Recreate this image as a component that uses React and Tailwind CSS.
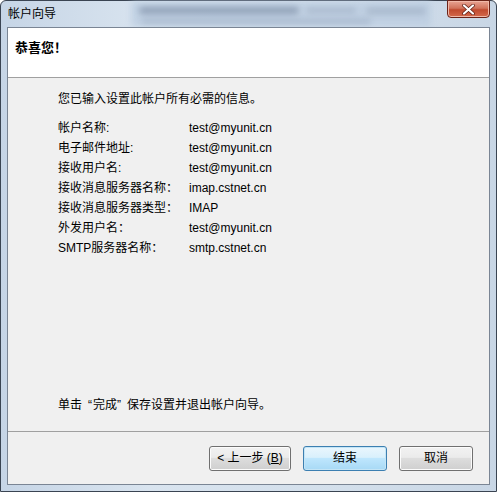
import React from "react";

const rows = [
  ["帐户名称:", "test@myunit.cn"],
  ["电子邮件地址:", "test@myunit.cn"],
  ["接收用户名:", "test@myunit.cn"],
  ["接收消息服务器名称：", "imap.cstnet.cn"],
  ["接收消息服务器类型：", "IMAP"],
  ["外发用户名：", "test@myunit.cn"],
  ["SMTP服务器名称：", "smtp.cstnet.cn"],
];

const font = "font-['Liberation_Sans','Noto_Sans_CJK_SC',sans-serif]";

function VistaButton({ children, primary, className = "" }) {
  return (
    <div
      className={`flex h-[25px] items-center justify-center rounded-[3px] border text-[12px] text-black ${
        primary
          ? "border-[#3c7fb1] bg-[linear-gradient(#eaf6fd_0%,#d9f0fc_45%,#bee6fd_50%,#a7d9f5_100%)] shadow-[inset_0_0_0_1px_#c4e5f6]"
          : "border-[#707070] bg-[linear-gradient(#f2f2f2_0%,#ebebeb_45%,#dddddd_50%,#cfcfcf_100%)] shadow-[inset_0_0_0_1px_#fcfcfc]"
      } ${className}`}
    >
      {children}
    </div>
  );
}

export default function App() {
  return (
    <div className={`${font} h-[492px] w-[497px] overflow-hidden`}>
      <div className="flex h-full flex-col rounded-t-[6px] border border-[#3a4452] bg-[linear-gradient(90deg,#c6d5e6_0%,#d9e4ef_30%,#d3dfeb_70%,#c8d6e5_100%)]">
        {/* title bar, with the blurred window behind the glass */}
        <div className="relative flex h-[26px] items-center pl-[7px]">
          <span className="relative z-10 text-[12px] text-black">帐户向导</span>
          <div className="absolute left-[130px] top-0 h-[26px] w-[300px] bg-[#b9cbe0] opacity-70 blur-[3px]" />
          <div className="absolute left-[138px] top-[6px] h-[7px] w-[160px] rounded-full bg-[#6e7f98] opacity-60 blur-[3px]" />
          <div className="absolute left-[305px] top-[7px] h-[5px] w-[50px] rounded-full bg-[#8d9db3] opacity-50 blur-[3px]" />
          <div className="absolute left-[365px] top-[7px] h-[6px] w-[60px] rounded-full bg-[#8d9db3] opacity-50 blur-[3px]" />
          <div className="absolute left-[140px] top-[18px] h-[5px] w-[230px] rounded-full bg-[#8192ab] opacity-40 blur-[3px]" />
          <div className="absolute right-[6px] top-[-1px] z-10 flex h-[18px] w-[43px] items-center justify-center rounded-b-[4px] border border-[#6b2318] bg-[linear-gradient(#e8a493_0%,#d1735c_45%,#c04a2f_55%,#d46a4c_100%)] shadow-[inset_0_0_0_1px_#f0b8a8]">
            <svg width="13" height="11" viewBox="0 0 13 11">
              <path d="M2 1.5 L11 9.5 M11 1.5 L2 9.5" stroke="#5a1a10" strokeWidth="3.6" strokeLinecap="round" />
              <path d="M2 1.5 L11 9.5 M11 1.5 L2 9.5" stroke="#ffffff" strokeWidth="2.2" strokeLinecap="round" />
            </svg>
          </div>
        </div>

        {/* client area */}
        <div className="relative z-10 mx-[6px] flex flex-1 flex-col border border-[#7a8594]">
          <div className="h-[50px] border-b border-[#a0a0a0] bg-white pl-[7px] pt-[7px]">
            <span className="text-[13px] font-bold text-black">恭喜您！</span>
          </div>

          <div className="flex flex-1 flex-col bg-[#f0f0f0] pl-[50px] pt-[13px] text-[12px] text-black">
            <div className="leading-[16px]">您已输入设置此帐户所有必需的信息。</div>
            <div className="mt-[11px] flex flex-col">
              {rows.map(([label, value]) => (
                <div key={label} className="flex h-[20px] items-center">
                  <span className="w-[131px]">{label}</span>
                  <span>{value}</span>
                </div>
              ))}
            </div>
            <div className="mt-auto mb-[18px] leading-[16px]">
              单击<span className="ml-[6px] mr-[1px]">“</span>完成<span className="mr-[6px]">”</span>保存设置并退出帐户向导。
            </div>
          </div>

          <div className="flex h-[53px] items-center justify-end gap-[12px] border-t border-[#a0a0a0] bg-[#f0f0f0] pr-[16px]">
            <VistaButton className="w-[82px]">
              &lt; 上一步 (<span className="underline">B</span>)
            </VistaButton>
            <VistaButton primary className="w-[84px]">结束</VistaButton>
            <VistaButton className="w-[74px]">取消</VistaButton>
          </div>
        </div>
        <div className="h-[6px]" />
      </div>
    </div>
  );
}
